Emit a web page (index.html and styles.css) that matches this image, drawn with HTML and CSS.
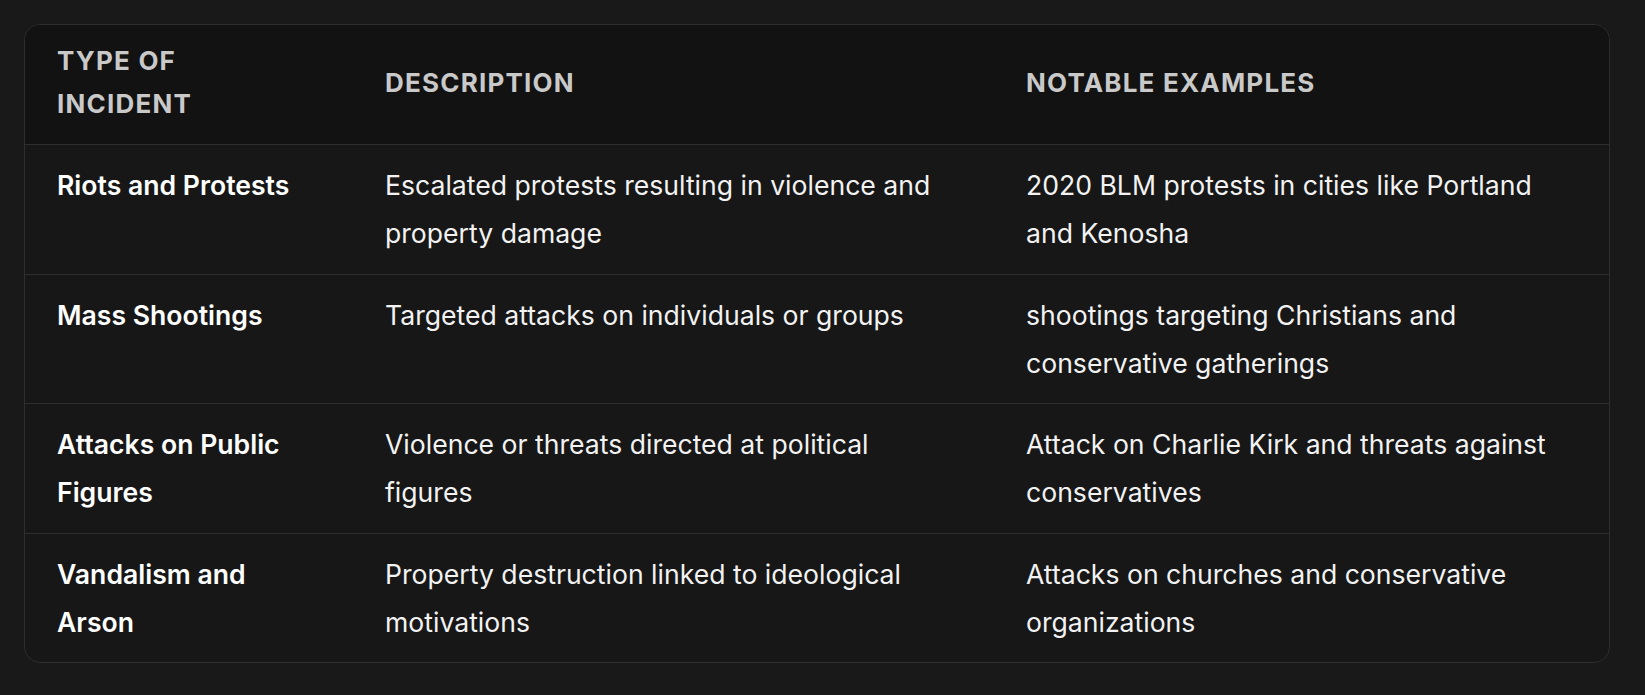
FILE: index.html
```html
<!DOCTYPE html>
<html lang="en">
<head>
<meta charset="utf-8">
<title>Incidents</title>
<link rel="stylesheet" href="styles.css">
</head>
<body>
<div class="page">
  <div class="table-wrap">
    <table class="incidents">
      <colgroup>
        <col class="c1"><col class="c2"><col class="c3">
      </colgroup>
      <thead>
        <tr>
          <th class="th-first">Type of Incident</th>
          <th>Description</th>
          <th>Notable Examples</th>
        </tr>
      </thead>
      <tbody>
        <tr>
          <td class="name">Riots and Protests</td>
          <td>Escalated protests resulting in violence and property damage</td>
          <td>2020 BLM protests in cities like Portland and Kenosha</td>
        </tr>
        <tr>
          <td class="name">Mass Shootings</td>
          <td>Targeted attacks on individuals or groups</td>
          <td>shootings targeting Christians and conservative gatherings</td>
        </tr>
        <tr>
          <td class="name">Attacks on Public Figures</td>
          <td>Violence or threats directed at political figures</td>
          <td>Attack on Charlie Kirk and threats against conservatives</td>
        </tr>
        <tr>
          <td class="name">Vandalism and Arson</td>
          <td>Property destruction linked to ideological motivations</td>
          <td>Attacks on churches and conservative organizations</td>
        </tr>
      </tbody>
    </table>
  </div>
</div>
</body>
</html>
```

FILE: styles.css
```css
html, body {
  margin: 0;
  padding: 0;
  background: #191919;
}

.page {
  padding: 24px 35px 33px 24px;
  font-family: "Inter", "Liberation Sans", sans-serif;
}

.table-wrap {
  border: 1px solid #2e2e2e;
  border-radius: 16px;
  overflow: hidden;
  background: #171717;
}

.incidents {
  width: 100%;
  border-collapse: collapse;
  table-layout: fixed;
}

.c1 { width: 328px; }
.c2 { width: 641px; }
.c3 { width: auto; }

.incidents thead tr {
  background: #121212;
}

.incidents th {
  text-align: left;
  vertical-align: middle;
  padding: 14px 32px 19px 32px;
  font-size: 26px;
  line-height: 43px;
  font-weight: 700;
  text-transform: uppercase;
  color: #c9c9c9;
  letter-spacing: 1.2px;
}

.incidents th.th-first {
  padding-right: 90px;
}

.incidents td {
  vertical-align: top;
  padding: 16px 32px 16.5px 32px;
  font-size: 26.6px;
  line-height: 48px;
  color: #f2f2f2;
  border-top: 1px solid #2e2e2e;
}

.incidents td.name {
  font-weight: 600;
  color: #ffffff;
}
```
